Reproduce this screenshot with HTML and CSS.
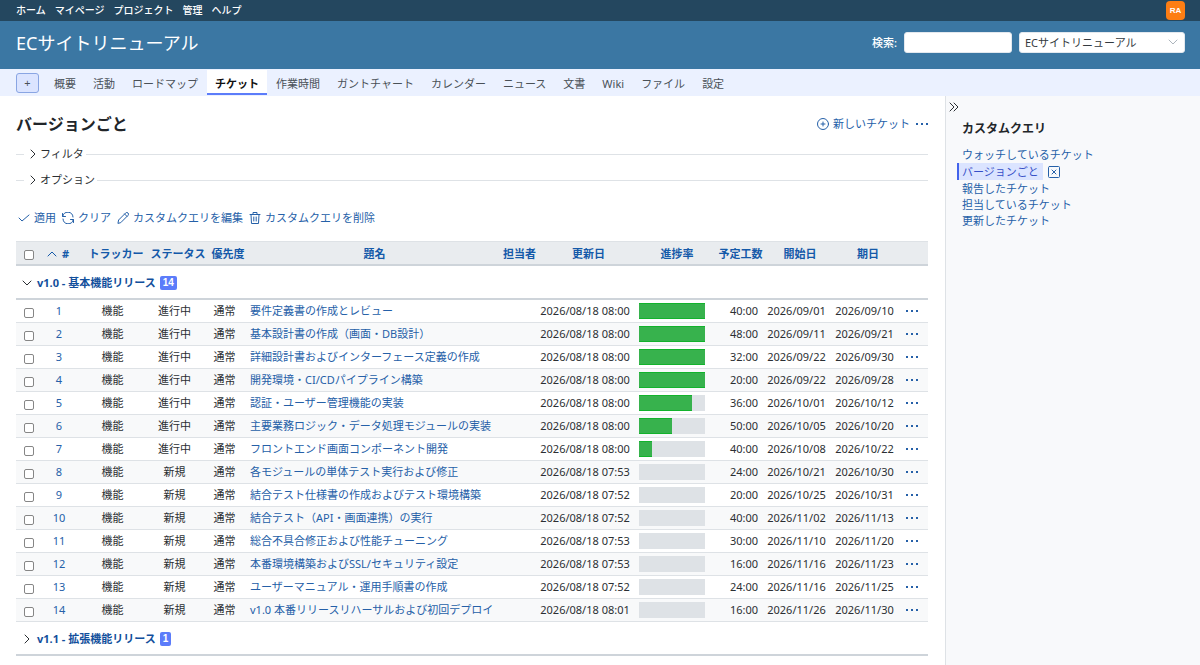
FILE: index.html
```html
<!DOCTYPE html>
<html lang="ja">
<head>
    <meta charset="UTF-8">
    <meta name="viewport" content="width=device-width, initial-scale=1.0">
    <title>バージョンごと - ECサイトリニューアル</title>
    <link rel="stylesheet" href="styles.css">
</head>
<body>
    <svg class="sprite" aria-hidden="true">
        <symbol id="i-right" viewBox="0 0 12 12"><path d="M4 2l4 4-4 4"/></symbol>
        <symbol id="i-down" viewBox="0 0 12 12"><path d="M2 4l4 4 4-4"/></symbol>
        <symbol id="i-up" viewBox="0 0 12 12"><path d="M2 8l4-4 4 4"/></symbol>
        <symbol id="i-dots" viewBox="0 0 12 12"><path class="dots" d="M0 5h2v2H0zM5 5h2v2H5zM10 5h2v2h-2z"/></symbol>
    </svg>

    <nav id="top-menu" class="top-menu">
        <a href="#">ホーム</a>
        <a href="#">マイページ</a>
        <a href="#">プロジェクト</a>
        <a href="#">管理</a>
        <a href="#">ヘルプ</a>
        <a class="avatar" href="#">RA</a>
    </nav>

    <header class="header">
        <h1>ECサイトリニューアル</h1>
        <form class="quick-search">
            <label for="q">検索:</label>
            <input id="q" type="text">
            <div class="select-wrap">
                <select aria-label="プロジェクト">
                    <option>ECサイトリニューアル</option>
                </select>
                <svg class="icon" viewBox="0 0 12 12"><path d="M2 4l4 4 4-4"/></svg>
            </div>
        </form>
    </header>

    <nav class="main-menu">
        <button class="new-object" type="button">+</button>
        <a href="#">概要</a>
        <a href="#">活動</a>
        <a href="#">ロードマップ</a>
        <a class="selected" href="#">チケット</a>
        <a href="#">作業時間</a>
        <a href="#">ガントチャート</a>
        <a href="#">カレンダー</a>
        <a href="#">ニュース</a>
        <a href="#">文書</a>
        <a href="#">Wiki</a>
        <a href="#">ファイル</a>
        <a href="#">設定</a>
    </nav>

    <div class="main">
        <main class="content">
            <div class="title-row">
                <h2>バージョンごと</h2>
                <div class="contextual">
                    <a href="#"><svg class="icon" viewBox="0 0 12 12"><circle cx="6" cy="6" r="5.5"/><path d="M6 4v4M4 6h4"/></svg>新しいチケット</a>
                    <a href="#" aria-label="操作"><svg class="icon"><use href="#i-dots"/></svg></a>
                </div>
            </div>

            <fieldset>
                <legend><button type="button"><svg class="icon"><use href="#i-right"/></svg>フィルタ</button></legend>
            </fieldset>
            <fieldset>
                <legend><button type="button"><svg class="icon"><use href="#i-right"/></svg>オプション</button></legend>
            </fieldset>

            <div class="query-buttons">
                <a href="#"><svg class="icon" viewBox="0 0 12 12"><path d="M1 6l3 3 7-6"/></svg>適用</a>
                <a href="#"><svg class="icon" viewBox="0 0 12 12"><path d="M.5 1.5v3h3M.7 4.500A5.200 5.200 0 0 1 11 5M11.500 10.500v-3h-3M11.300 7.500A5.200 5.200 0 0 1 1 7"/></svg>クリア</a>
                <a href="#"><svg class="icon" viewBox="0 0 12 12"><path d="M1 11l.6-3 7-7a1.600 1.600 0 0 1 2.400 2.400l-7 7zM7.600 2l2.400 2.400"/></svg>カスタムクエリを編集</a>
                <a href="#"><svg class="icon" viewBox="0 0 12 12"><path d="M1 2.500h10M4 2.500v-2h4v2M2 2.500l.5 9h7l.5-9M4.800 5v4M7.200 5v4"/></svg>カスタムクエリを削除</a>
            </div>

            <table class="issues">
                <colgroup>
                    <col class="c-check"><col class="c-id"><col class="c-tracker"><col class="c-status"><col class="c-priority"><col>
                    <col class="c-assigned"><col class="c-updated"><col class="c-done"><col class="c-hours"><col class="c-start"><col class="c-due"><col class="c-buttons">
                </colgroup>
                <thead>
                    <tr>
                        <th><input type="checkbox" aria-label="すべて選択"></th>
                        <th><a class="sort" href="#"><svg class="icon"><use href="#i-up"/></svg>#</a></th>
                        <th><a href="#">トラッカー</a></th>
                        <th><a href="#">ステータス</a></th>
                        <th><a href="#">優先度</a></th>
                        <th><a href="#">題名</a></th>
                        <th><a href="#">担当者</a></th>
                        <th><a href="#">更新日</a></th>
                        <th><a href="#">進捗率</a></th>
                        <th><a href="#">予定工数</a></th>
                        <th><a href="#">開始日</a></th>
                        <th><a href="#">期日</a></th>
                        <th></th>
                    </tr>
                </thead>
                <tbody>
                    <tr class="group">
                        <td colspan="13"><div><svg class="icon"><use href="#i-down"/></svg><a href="#">v1.0 - 基本機能リリース</a><span class="count">14</span></div></td>
                    </tr>
                    <tr>
                        <td><input type="checkbox" aria-label="1"></td><td><a href="#">1</a></td><td>機能</td><td>進行中</td><td>通常</td>
                        <td class="subject"><a href="#">要件定義書の作成とレビュー</a></td><td></td><td>2026/08/18 08:00</td>
                        <td><div class="progress"><div style="width: 100%"></div></div></td><td class="hours">40:00</td><td>2026/09/01</td><td>2026/09/10</td>
                        <td><a href="#" aria-label="操作"><svg class="icon"><use href="#i-dots"/></svg></a></td>
                    </tr>
                    <tr>
                        <td><input type="checkbox" aria-label="2"></td><td><a href="#">2</a></td><td>機能</td><td>進行中</td><td>通常</td>
                        <td class="subject"><a href="#">基本設計書の作成（画面・DB設計）</a></td><td></td><td>2026/08/18 08:00</td>
                        <td><div class="progress"><div style="width: 100%"></div></div></td><td class="hours">48:00</td><td>2026/09/11</td><td>2026/09/21</td>
                        <td><a href="#" aria-label="操作"><svg class="icon"><use href="#i-dots"/></svg></a></td>
                    </tr>
                    <tr>
                        <td><input type="checkbox" aria-label="3"></td><td><a href="#">3</a></td><td>機能</td><td>進行中</td><td>通常</td>
                        <td class="subject"><a href="#">詳細設計書およびインターフェース定義の作成</a></td><td></td><td>2026/08/18 08:00</td>
                        <td><div class="progress"><div style="width: 100%"></div></div></td><td class="hours">32:00</td><td>2026/09/22</td><td>2026/09/30</td>
                        <td><a href="#" aria-label="操作"><svg class="icon"><use href="#i-dots"/></svg></a></td>
                    </tr>
                    <tr>
                        <td><input type="checkbox" aria-label="4"></td><td><a href="#">4</a></td><td>機能</td><td>進行中</td><td>通常</td>
                        <td class="subject"><a href="#">開発環境・CI/CDパイプライン構築</a></td><td></td><td>2026/08/18 08:00</td>
                        <td><div class="progress"><div style="width: 100%"></div></div></td><td class="hours">20:00</td><td>2026/09/22</td><td>2026/09/28</td>
                        <td><a href="#" aria-label="操作"><svg class="icon"><use href="#i-dots"/></svg></a></td>
                    </tr>
                    <tr>
                        <td><input type="checkbox" aria-label="5"></td><td><a href="#">5</a></td><td>機能</td><td>進行中</td><td>通常</td>
                        <td class="subject"><a href="#">認証・ユーザー管理機能の実装</a></td><td></td><td>2026/08/18 08:00</td>
                        <td><div class="progress"><div style="width: 80%"></div></div></td><td class="hours">36:00</td><td>2026/10/01</td><td>2026/10/12</td>
                        <td><a href="#" aria-label="操作"><svg class="icon"><use href="#i-dots"/></svg></a></td>
                    </tr>
                    <tr>
                        <td><input type="checkbox" aria-label="6"></td><td><a href="#">6</a></td><td>機能</td><td>進行中</td><td>通常</td>
                        <td class="subject"><a href="#">主要業務ロジック・データ処理モジュールの実装</a></td><td></td><td>2026/08/18 08:00</td>
                        <td><div class="progress"><div style="width: 50%"></div></div></td><td class="hours">50:00</td><td>2026/10/05</td><td>2026/10/20</td>
                        <td><a href="#" aria-label="操作"><svg class="icon"><use href="#i-dots"/></svg></a></td>
                    </tr>
                    <tr>
                        <td><input type="checkbox" aria-label="7"></td><td><a href="#">7</a></td><td>機能</td><td>進行中</td><td>通常</td>
                        <td class="subject"><a href="#">フロントエンド画面コンポーネント開発</a></td><td></td><td>2026/08/18 08:00</td>
                        <td><div class="progress"><div style="width: 20%"></div></div></td><td class="hours">40:00</td><td>2026/10/08</td><td>2026/10/22</td>
                        <td><a href="#" aria-label="操作"><svg class="icon"><use href="#i-dots"/></svg></a></td>
                    </tr>
                    <tr>
                        <td><input type="checkbox" aria-label="8"></td><td><a href="#">8</a></td><td>機能</td><td>新規</td><td>通常</td>
                        <td class="subject"><a href="#">各モジュールの単体テスト実行および修正</a></td><td></td><td>2026/08/18 07:53</td>
                        <td><div class="progress"></div></td><td class="hours">24:00</td><td>2026/10/21</td><td>2026/10/30</td>
                        <td><a href="#" aria-label="操作"><svg class="icon"><use href="#i-dots"/></svg></a></td>
                    </tr>
                    <tr>
                        <td><input type="checkbox" aria-label="9"></td><td><a href="#">9</a></td><td>機能</td><td>新規</td><td>通常</td>
                        <td class="subject"><a href="#">結合テスト仕様書の作成およびテスト環境構築</a></td><td></td><td>2026/08/18 07:52</td>
                        <td><div class="progress"></div></td><td class="hours">20:00</td><td>2026/10/25</td><td>2026/10/31</td>
                        <td><a href="#" aria-label="操作"><svg class="icon"><use href="#i-dots"/></svg></a></td>
                    </tr>
                    <tr>
                        <td><input type="checkbox" aria-label="10"></td><td><a href="#">10</a></td><td>機能</td><td>新規</td><td>通常</td>
                        <td class="subject"><a href="#">結合テスト（API・画面連携）の実行</a></td><td></td><td>2026/08/18 07:52</td>
                        <td><div class="progress"></div></td><td class="hours">40:00</td><td>2026/11/02</td><td>2026/11/13</td>
                        <td><a href="#" aria-label="操作"><svg class="icon"><use href="#i-dots"/></svg></a></td>
                    </tr>
                    <tr>
                        <td><input type="checkbox" aria-label="11"></td><td><a href="#">11</a></td><td>機能</td><td>新規</td><td>通常</td>
                        <td class="subject"><a href="#">総合不具合修正および性能チューニング</a></td><td></td><td>2026/08/18 07:53</td>
                        <td><div class="progress"></div></td><td class="hours">30:00</td><td>2026/11/10</td><td>2026/11/20</td>
                        <td><a href="#" aria-label="操作"><svg class="icon"><use href="#i-dots"/></svg></a></td>
                    </tr>
                    <tr>
                        <td><input type="checkbox" aria-label="12"></td><td><a href="#">12</a></td><td>機能</td><td>新規</td><td>通常</td>
                        <td class="subject"><a href="#">本番環境構築およびSSL/セキュリティ設定</a></td><td></td><td>2026/08/18 07:53</td>
                        <td><div class="progress"></div></td><td class="hours">16:00</td><td>2026/11/16</td><td>2026/11/23</td>
                        <td><a href="#" aria-label="操作"><svg class="icon"><use href="#i-dots"/></svg></a></td>
                    </tr>
                    <tr>
                        <td><input type="checkbox" aria-label="13"></td><td><a href="#">13</a></td><td>機能</td><td>新規</td><td>通常</td>
                        <td class="subject"><a href="#">ユーザーマニュアル・運用手順書の作成</a></td><td></td><td>2026/08/18 07:52</td>
                        <td><div class="progress"></div></td><td class="hours">24:00</td><td>2026/11/16</td><td>2026/11/25</td>
                        <td><a href="#" aria-label="操作"><svg class="icon"><use href="#i-dots"/></svg></a></td>
                    </tr>
                    <tr>
                        <td><input type="checkbox" aria-label="14"></td><td><a href="#">14</a></td><td>機能</td><td>新規</td><td>通常</td>
                        <td class="subject"><a href="#">v1.0 本番リリースリハーサルおよび初回デプロイ</a></td><td></td><td>2026/08/18 08:01</td>
                        <td><div class="progress"></div></td><td class="hours">16:00</td><td>2026/11/26</td><td>2026/11/30</td>
                        <td><a href="#" aria-label="操作"><svg class="icon"><use href="#i-dots"/></svg></a></td>
                    </tr>
                    <tr class="group">
                        <td colspan="13"><div><svg class="icon"><use href="#i-right"/></svg><a href="#">v1.1 - 拡張機能リリース</a><span class="count">1</span></div></td>
                    </tr>
                </tbody>
            </table>
        </main>

        <aside class="sidebar">
            <button class="collapse" type="button" aria-label="サイドバーを隠す"><svg class="icon" viewBox="0 0 12 12"><path d="M2 2l4 4-4 4M6 2l4 4-4 4"/></svg></button>
            <h3>カスタムクエリ</h3>
            <ul>
                <li><a href="#">ウォッチしているチケット</a></li>
                <li class="selected">
                    <a href="#">バージョンごと</a>
                    <button type="button" aria-label="クリア"><svg class="icon" viewBox="0 0 12 12"><rect x=".5" y=".5" width="11" height="11" rx="1"/><path d="M4 4l4 4M8 4l-4 4"/></svg></button>
                </li>
                <li><a href="#">報告したチケット</a></li>
                <li><a href="#">担当しているチケット</a></li>
                <li><a href="#">更新したチケット</a></li>
            </ul>
        </aside>
    </div>
</body>
</html>
```
FILE: styles.css
```css
* {
    box-sizing: border-box;
}
body {
    margin: 0;
    min-height: 100vh;
    display: flex;
    flex-direction: column;
    font-family: "Noto Sans", "Noto Sans CJK JP", sans-serif;
    font-size: 11px;
    line-height: 16px;
    color: #2b2f33;
    background: #fff;
    white-space: nowrap;
}
a {
    color: #2560a8;
    text-decoration: none;
}
a:hover {
    text-decoration: underline;
}
button, input, select {
    font: inherit;
    color: inherit;
}
button {
    padding: 0;
    border: none;
    background: none;
    cursor: pointer;
}
.sprite {
    display: none;
}
.icon {
    width: 12px;
    height: 12px;
    flex: none;
    fill: none;
    stroke: currentColor;
    stroke-width: 1;
    stroke-linecap: round;
    stroke-linejoin: round;
}
.dots {
    fill: currentColor;
    stroke: none;
}

/* header */
.top-menu {
    display: flex;
    align-items: center;
    gap: 9px;
    height: 21px;
    padding: 0 15px 1px 16px;
    background: #24475f;
    font-size: 10px;
    font-weight: 500;
}
.top-menu a {
    color: #fff;
}
.top-menu .avatar {
    width: 19px;
    height: 19px;
    margin-left: auto;
    border-radius: 4px;
    background: #fd7e14;
    font-family: "Liberation Sans", Arial, sans-serif;
    font-size: 8px;
    font-weight: bold;
    line-height: 19px;
    text-align: center;
}
.header {
    display: flex;
    align-items: center;
    justify-content: space-between;
    height: 48px;
    padding: 0 15px 5px 16px;
    background: #3b77a3;
    color: #fff;
}
h1 {
    margin: 0;
    font-size: 18px;
    font-weight: normal;
    line-height: 24px;
}
.quick-search {
    display: flex;
    align-items: center;
    gap: 7px;
}
.quick-search label {
    font-weight: 500;
}
.quick-search input, .quick-search select {
    height: 21px;
    border: 1px solid #e3e8ee;
    border-radius: 3px;
    background: #fff;
    color: #343a40;
}
.quick-search input {
    width: 108px;
}
.select-wrap {
    position: relative;
}
.quick-search select {
    width: 166px;
    padding: 0 20px 0 5px;
    appearance: none;
}
.select-wrap .icon {
    position: absolute;
    top: 4px;
    right: 6px;
    color: #adb5bd;
    pointer-events: none;
}

/* tabs */
.main-menu {
    display: flex;
    align-items: center;
    gap: 1px;
    height: 27px;
    padding: 0 16px;
    background: #ebf1ff;
}
.main-menu a {
    height: 25px;
    padding: 1px 8px 0;
    color: #495057;
    line-height: 25px;
}
.main-menu a.selected {
    border-bottom: 2px solid #5c7cfa;
    background: #fff;
    color: #111;
    font-weight: bold;
}
.new-object {
    width: 23px;
    height: 20px;
    margin-right: 6px;
    border: 1px solid #89a5e3;
    border-radius: 3px;
    background: #dbe4ff;
    color: #495057;
}

/* content */
.main {
    flex: 1;
    display: flex;
}
.content {
    flex: 1;
    min-width: 0;
    padding: 16px 17px 8px 16px;
}
.title-row {
    display: flex;
    align-items: center;
    justify-content: space-between;
    margin-bottom: 8px;
}
h2 {
    margin: 0;
    font-size: 16px;
    line-height: 24px;
    color: #212529;
}
.contextual, .query-buttons {
    display: flex;
    gap: 6px;
}
.contextual a, .query-buttons a {
    display: flex;
    align-items: center;
    gap: 4px;
}
fieldset {
    min-width: 0;
    margin: 0 0 6px;
    padding: 0;
    border: none;
    border-top: 1px solid #dee2e6;
}
legend {
    margin-left: 8px;
    padding: 0 2px 0 3px;
    line-height: 20px;
}
legend button {
    display: flex;
    align-items: center;
    height: 20px;
    gap: 1px;
}
.query-buttons {
    margin: 20px 0 15px;
    padding-left: 2px;
}

/* issue list */
.issues {
    width: 100%;
    table-layout: fixed;
    border-collapse: separate;
    border-spacing: 0;
}
.c-check { width: 25px; }
.c-id { width: 43px; }
.c-tracker { width: 64px; }
.c-status { width: 60px; }
.c-priority { width: 40px; }
.c-assigned { width: 37px; }
.c-updated { width: 101px; }
.c-done { width: 76px; }
.c-hours { width: 51px; }
.c-start { width: 68px; }
.c-due { width: 68px; }
.c-buttons { width: 26px; }
.issues th {
    height: 25px;
    padding: 2px 0 0;
    border-top: 1px solid #dee2e6;
    border-bottom: 2px solid #ced4da;
    background: #e9ecef;
}
.issues th a {
    color: #1459a9;
}
.issues .sort {
    display: flex;
    align-items: center;
    gap: 4px;
    padding-left: 5px;
}
.issues td {
    height: 23px;
    padding: 0 7px 0 0;
    border-bottom: 1px solid #dee2e6;
    text-align: center;
}
.issues tbody tr:nth-child(odd) td {
    background: #f8f9fa;
}
.issues td .icon {
    display: block;
}
.issues td:first-child, .issues th:first-child {
    padding: 3px 0 0;
}
.issues td.subject {
    padding: 0 0 0 2px;
    text-align: left;
}
.issues td.hours {
    padding-right: 8px;
    text-align: right;
}
.issues td:last-child {
    padding-left: 4px;
}
.issues input {
    display: block;
    width: 10px;
    height: 10px;
    margin: 0 auto;
    border: 1px solid #868686;
    border-radius: 2px;
    background: #fff;
    appearance: none;
}
.issues input:checked {
    background: #5c7cfa;
}
.progress {
    width: 66px;
    height: 16px;
    background: #dee2e6;
}
.progress div {
    height: 16px;
    border: 1px solid #12b32c;
    border-width: 1px 0;
    background: #37b24d;
}
.issues tbody tr.group td {
    height: 34px;
    padding: 1px 0 0 5px;
    border-bottom: 2px solid #ced4da;
    background: #fff;
    font-weight: bold;
}
.group div {
    display: flex;
    align-items: center;
    gap: 4px;
}
.group a {
    color: #124f9c;
}
.count {
    padding: 0 3px;
    border-radius: 2px;
    background: #5c7cfa;
    color: #fff;
    font-family: "Liberation Sans", Arial, sans-serif;
    font-size: 10px;
    line-height: 14px;
}

/* sidebar */
.sidebar {
    flex: 0 0 255px;
    padding: 5px 16px;
    border-left: 1px solid #dee2e6;
    background: #f8f9fb;
}
.collapse {
    display: flex;
    margin: 0 0 8px -14px;
}
h3 {
    margin: 0 0 10px;
    font-size: 12px;
    line-height: 16px;
    color: #212529;
}
.sidebar ul {
    margin: 0;
    padding: 0;
    list-style: none;
}
.sidebar li {
    display: flex;
    align-items: center;
}
.sidebar .selected {
    margin: 0 0 1px -5px;
}
.sidebar .selected a {
    padding: 0 4px 0 3px;
    border-left: 2px solid #4263eb;
    background: #dbe4ff;
    color: #364fc7;
    line-height: 17px;
}
.sidebar .selected button {
    display: flex;
    margin-left: 5px;
    color: #2560a8;
}
```
